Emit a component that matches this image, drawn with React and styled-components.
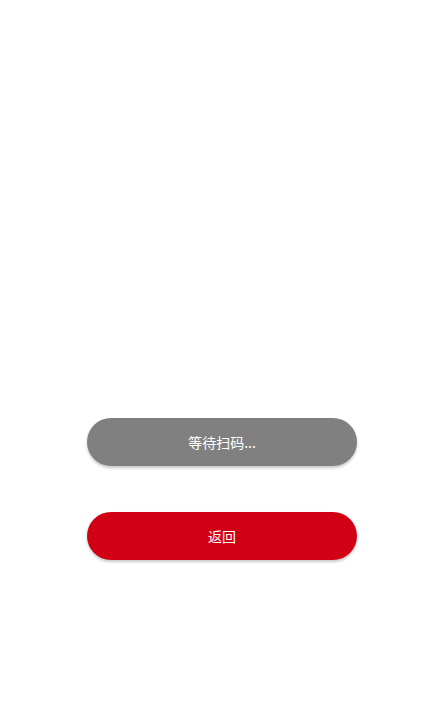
import React from 'react'
import styled, { createGlobalStyle } from 'styled-components'

const GlobalStyle = createGlobalStyle`
  html, body {
    margin: 0;
    padding: 0;
    background: #ffffff;
  }
  body {
    font-family: "Liberation Sans", "Noto Sans CJK SC", sans-serif;
  }
`

const Page = styled.div`
  width: 100%;
  min-height: 100vh;
  display: flex;
  flex-direction: column;
  align-items: center;
`

const QrArea = styled.div`
  width: 270px;
  height: 418px;
`

const Actions = styled.div`
  display: flex;
  flex-direction: column;
  gap: 46px;
  margin-left: 8px;
`

const Button = styled.button`
  width: 270px;
  height: 48px;
  border: none;
  border-radius: 24px;
  background-color: ${(p) => (p.$variant === 'danger' ? '#d20014' : '#808080')};
  color: #ffffff;
  font-family: "Noto Sans CJK SC", sans-serif;
  font-size: 14px;
  box-shadow: 0 2px 3px rgba(0, 0, 0, 0.22);
  cursor: pointer;
`

const App = () => {
  return (
    <Page>
      <GlobalStyle />
      <QrArea />
      <Actions>
        <Button>等待扫码...</Button>
        <Button $variant="danger">返回</Button>
      </Actions>
    </Page>
  )
}

export default App
